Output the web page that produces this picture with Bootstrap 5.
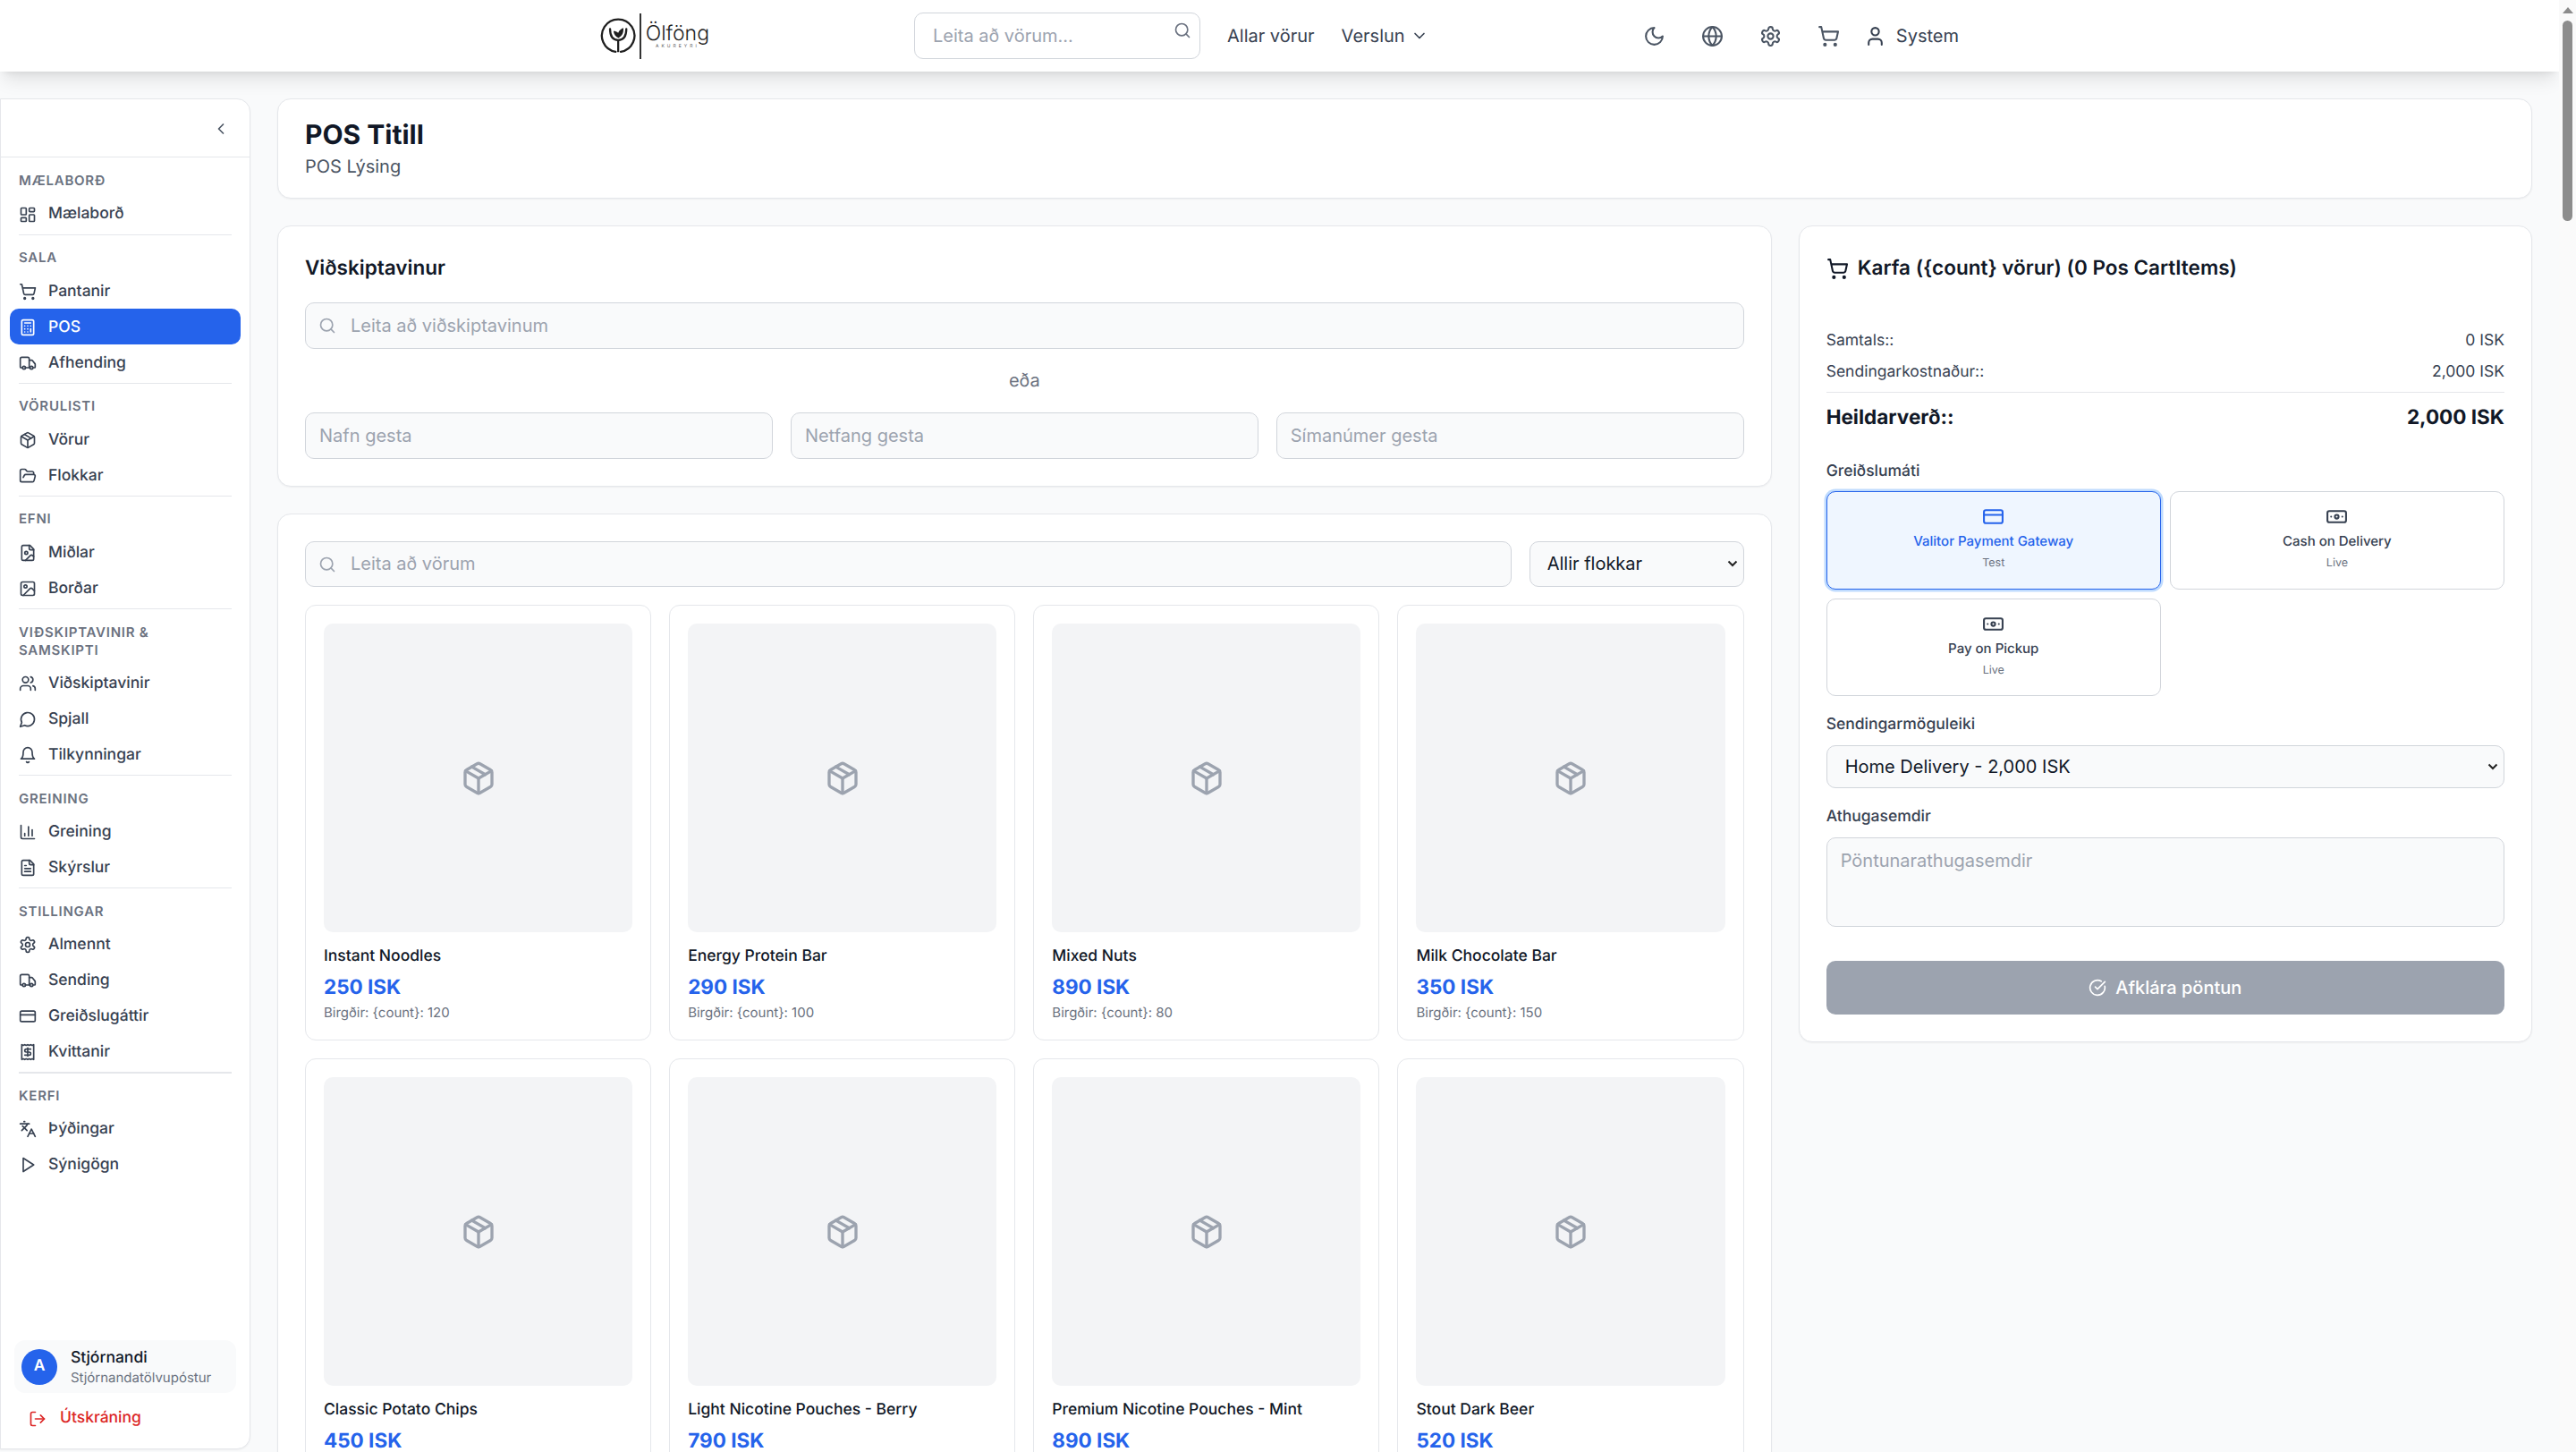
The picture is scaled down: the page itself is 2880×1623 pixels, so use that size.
<!DOCTYPE html>
<html lang="is">
<head>
  <meta charset="UTF-8">
  <title>POS Titill</title>
  <link href="https://cdn.jsdelivr.net/npm/bootstrap@5.3.0/dist/css/bootstrap.min.css" rel="stylesheet">
  <style>
    html, body { height: 100%; overflow: hidden; }
    body { background-color: #f9fafb; font-family: Inter, "Liberation Sans", sans-serif; color: #111827; font-size: 17.5px; text-rendering: geometricPrecision; }
    .ic { width: 20px; height: 20px; flex: none; fill: none; stroke: currentColor; stroke-width: 2; stroke-linecap: round; stroke-linejoin: round; }
    .ic-lg { width: 25px; height: 25px; }

    .page-col { width: 2861px; flex: none; height: 100vh; overflow: hidden; }
    .scroll-rail { width: 19px; flex: none; background-color: #fafafa; position: relative; }
    .rail-up { width: 0; height: 0; margin: 8px auto 0; border: 6.5px solid transparent; border-top: 0; border-bottom: 7px solid #8c8c8c; }
    .rail-thumb { width: 11px; height: 224px; margin: 8px auto 0; background-color: #8c8c8c; border-radius: 6px; }

    /* topbar */
    .topbar { height: 80px; background-color: #fff; position: relative; z-index: 5; box-shadow: 0 12.5px 18.75px -3.75px rgba(0,0,0,.1), 0 5px 7.5px -5px rgba(0,0,0,.1); }
    .topbar-in { width: 1519px; height: 80px; margin-left: 671px; }
    .brand-block { width: 122px; flex: none; }
    .brand-word { font-family: Inter, sans-serif; font-weight: 300; font-size: 23px; line-height: 23px; color: #1f1f1f; }
    .brand-sub { font-size: 5px; line-height: 6px; letter-spacing: 3px; color: #555; text-align: center; }
    .brand-line { width: 1.5px; height: 51px; flex: none; background-color: #333; margin: 0 5px 0 4px; }
    .top-search { width: 320px; height: 52px; margin-left: 229px; position: relative; }
    .top-search .form-control { height: 52px; border: 1.25px solid #d1d5db; border-radius: 10px; font-size: 20px; padding: 0 50px 0 20px; color: #111827; }
    .top-search .ic { position: absolute; right: 10px; top: 10px; color: #6b7280; }
    .form-control::placeholder { color: #9ca3af; opacity: 1; }
    .top-link { font-size: 20px; color: #374151; text-decoration: none; }
    .top-ic { width: 65px; display: flex; justify-content: center; color: #4b5563; }

    /* sidebar */
    .side { width: 280px; height: 1510px; margin-top: 30px; flex: none; background-color: #fff; border: 1.25px solid #e5e7eb; border-radius: 0 15px 15px 0; box-shadow: 0 1px 2px rgba(0,0,0,.05); }
    .side-top { height: 65px; border-bottom: 1.25px solid #e5e7eb; padding: 2px 22px 0 0; color: #4b5563; }
    .side-scroll { padding-top: 16px; }
    .side-label { margin: 0 20px 7px; font-size: 15px; line-height: 20px; font-weight: 600; letter-spacing: .75px; color: #6b7280; text-transform: uppercase; }
    .side-link { height: 40px; margin: 0 10px; padding: 1px 10px 0; gap: 13px; display: flex; align-items: center; font-size: 17.5px; font-weight: 500; color: #374151; border-radius: 10px; text-decoration: none; }
    .side-link.on { background-color: #2563eb; color: #fff; }
    .side-sep { height: 1.25px; margin: 2.5px 20px 15.4px; background-color: #e5e7eb; }
    .side-user { margin: 0 15px 8px; height: 59px; padding: 0 8px; gap: 15px; background-color: #f9fafb; border-radius: 12px; }
    .side-av { width: 40px; height: 40px; background-color: #2563eb; color: #fff; font-size: 17.5px; font-weight: 600; border-radius: 50%; }
    .side-who { padding-top: 2px; }
    .side-name { font-size: 17.5px; line-height: 22px; font-weight: 500; color: #111827; }
    .side-mail { font-size: 15px; line-height: 22px; color: #6b7280; }
    .side-out { height: 40px; margin-bottom: 14px; padding: 1px 0 0 31px; gap: 15px; color: #dc2626; font-size: 17.5px; font-weight: 500; text-decoration: none; }

    /* main */
    .main-col { padding: 30px; width: 2581px; }
    .pane { background-color: #fff; border: 1.25px solid #e5e7eb; border-radius: 15px; box-shadow: 0 1px 2px rgba(0,0,0,.05); }
    .pane-head { padding: 20px 30px; margin-bottom: 30px; }
    .pane-body { padding: 30px; }
    .pos-title { font-size: 30px; line-height: 40px; font-weight: 700; margin: 0; }
    .pos-sub { font-size: 20px; line-height: 30px; color: #4b5563; margin: 0; }
    .pos-row { --bs-gutter-x: 30px; --bs-gutter-y: 0; }
    .block-title { font-size: 22.5px; line-height: 34px; font-weight: 600; margin: 0; }
    .field { height: 51.5px; background-color: #f9fafb; border: 1.25px solid #d1d5db; border-radius: 10px; font-size: 20px; color: #111827; padding: 0 15px; }
    .field-wrap { position: relative; }
    .field-wrap .field { padding-left: 50px; }
    .field-wrap .ic { position: absolute; left: 15px; top: 16px; color: #9ca3af; }
    .or-line { font-size: 20px; line-height: 30px; color: #6b7280; text-align: center; margin: 20px 0 21.5px; }
    .guest-row { --bs-gutter-x: 20px; --bs-gutter-y: 0; }
    .tools { gap: 20px; margin-bottom: 20px; }
    .chev-select { appearance: none; background-image: url("data:image/svg+xml,%3csvg xmlns='http://www.w3.org/2000/svg' viewBox='0 0 12 8'%3e%3cpath fill='none' stroke='%23222' stroke-width='2' d='M1.500 1.500 6 6l4.500-4.500'/%3e%3c/svg%3e"); background-repeat: no-repeat; background-position: right 6px center; background-size: 12px 8px; }
    .cat-select { width: 240px; flex: none; padding: 0 24px 0 19px; }
    .cat-select:focus, .field:focus { box-shadow: none; }

    .prod-row { --bs-gutter-x: 20px; --bs-gutter-y: 20px; }
    .prod { background-color: #fff; border: 1.25px solid #e5e7eb; border-radius: 12px; padding: 20px; }
    .prod-pic { height: 345px; background-color: #f3f4f6; border-radius: 10px; margin-bottom: 14px; color: #9ca3af; }
    .prod-pic .ic { width: 40px; height: 40px; }
    .prod-name { font-size: 17.5px; line-height: 26px; font-weight: 500; color: #111827; }
    .prod-price { font-size: 22.5px; line-height: 35px; font-weight: 700; color: #2563eb; margin-top: 4px; }
    .prod-stock { font-size: 15px; line-height: 21px; color: #6b7280; }

    /* cart */
    .cart-title { gap: 10px; }
    .sum-line { font-size: 17.5px; line-height: 26px; color: #374151; }
    .sum-sep { height: 1.25px; background-color: #e5e7eb; margin: 9px 0 10px; }
    .sum-total { font-size: 22.5px; line-height: 35px; font-weight: 700; color: #111827; }
    .cart-label { font-size: 17.5px; line-height: 26px; font-weight: 500; color: #374151; margin-bottom: 10px; }
    .pay-grid { display: grid; grid-template-columns: 1fr 1fr; gap: 10px; margin-bottom: 19px; }
    .pay-opt { height: 109.500px; padding-top: 15px; background-color: #fff; border: 1.25px solid #d1d5db; border-radius: 10px; text-align: center; color: #374151; }
    .pay-opt .ic { display: block; margin: 0 auto; }
    .pay-opt.on { background-color: #eff6ff; border-color: #2563eb; box-shadow: 0 0 0 2.5px #bfdbfe; color: #2563eb; }
    .pay-name { font-size: 15px; line-height: 22px; font-weight: 500; margin-top: 4px; }
    .pay-mode { font-size: 12.5px; line-height: 18px; color: #6b7280; margin-top: 5px; }
    .ship-select { height: 48px; padding: 0 24px 0 20px; margin-bottom: 18.5px; }
    .note-box { height: 100px; padding: 10.5px 15px; resize: none; }
    .pay-btn { height: 60px; margin-top: 38px; gap: 10px; font-size: 20px; font-weight: 500; color: #fff; background-color: #9ca3af; border: 0; border-radius: 10px; }
    .pay-btn:disabled { color: #fff; background-color: #9ca3af; opacity: 1; }
  </style>
</head>
<body class="d-flex">

<!-- Icons -->
<svg width="0" height="0" class="position-absolute">
  <symbol id="i-search" viewBox="0 0 24 24"><circle cx="11" cy="11" r="8"/><path d="m21 21-4.3-4.3"/></symbol>
  <symbol id="i-down" viewBox="0 0 24 24"><path d="m6 9 6 6 6-6"/></symbol>
  <symbol id="i-left" viewBox="0 0 24 24"><path d="m15 18-6-6 6-6"/></symbol>
  <symbol id="i-moon" viewBox="0 0 24 24"><path d="M12 3a6 6 0 0 0 9 9 9 9 0 1 1-9-9Z"/></symbol>
  <symbol id="i-globe" viewBox="0 0 24 24"><circle cx="12" cy="12" r="10"/><path d="M12 2a14.5 14.5 0 0 0 0 20 14.5 14.5 0 0 0 0-20"/><path d="M2 12h20"/></symbol>
  <symbol id="i-gear" viewBox="0 0 24 24"><path d="M12.22 2h-.44a2 2 0 0 0-2 2v.18a2 2 0 0 1-1 1.73l-.43.25a2 2 0 0 1-2 0l-.15-.08a2 2 0 0 0-2.73.73l-.22.38a2 2 0 0 0 .73 2.73l.15.1a2 2 0 0 1 1 1.72v.51a2 2 0 0 1-1 1.74l-.15.09a2 2 0 0 0-.73 2.73l.22.38a2 2 0 0 0 2.73.73l.15-.08a2 2 0 0 1 2 0l.43.25a2 2 0 0 1 1 1.73V20a2 2 0 0 0 2 2h.44a2 2 0 0 0 2-2v-.18a2 2 0 0 1 1-1.73l.43-.25a2 2 0 0 1 2 0l.15.08a2 2 0 0 0 2.73-.73l.22-.39a2 2 0 0 0-.73-2.73l-.15-.08a2 2 0 0 1-1-1.74v-.5a2 2 0 0 1 1-1.74l.15-.09a2 2 0 0 0 .73-2.73l-.22-.38a2 2 0 0 0-2.73-.73l-.15.08a2 2 0 0 1-2 0l-.43-.25a2 2 0 0 1-1-1.73V4a2 2 0 0 0-2-2z"/><circle cx="12" cy="12" r="3"/></symbol>
  <symbol id="i-cart" viewBox="0 0 24 24"><circle cx="8" cy="21" r="1"/><circle cx="19" cy="21" r="1"/><path d="M2.05 2.05h2l2.66 12.42a2 2 0 0 0 2 1.58h9.78a2 2 0 0 0 1.95-1.57l1.65-7.43H5.12"/></symbol>
  <symbol id="i-user" viewBox="0 0 24 24"><path d="M19 21v-2a4 4 0 0 0-4-4H9a4 4 0 0 0-4 4v2"/><circle cx="12" cy="7" r="4"/></symbol>
  <symbol id="i-dash" viewBox="0 0 24 24"><rect width="7" height="9" x="3" y="3" rx="1"/><rect width="7" height="5" x="14" y="3" rx="1"/><rect width="7" height="9" x="14" y="12" rx="1"/><rect width="7" height="5" x="3" y="16" rx="1"/></symbol>
  <symbol id="i-calc" viewBox="0 0 24 24"><rect width="16" height="20" x="4" y="2" rx="2"/><path d="M8 6h8"/><path d="M16 14v4"/><path d="M16 10h.01"/><path d="M12 10h.01"/><path d="M8 10h.01"/><path d="M12 14h.01"/><path d="M8 14h.01"/><path d="M12 18h.01"/><path d="M8 18h.01"/></symbol>
  <symbol id="i-truck" viewBox="0 0 24 24"><path d="M14 18V6a2 2 0 0 0-2-2H4a2 2 0 0 0-2 2v11a1 1 0 0 0 1 1h2"/><path d="M15 18H9"/><path d="M19 18h2a1 1 0 0 0 1-1v-3.65a1 1 0 0 0-.22-.624l-3.48-4.35A1 1 0 0 0 17.52 8H14"/><circle cx="17" cy="18" r="2"/><circle cx="7" cy="18" r="2"/></symbol>
  <symbol id="i-box" viewBox="0 0 24 24"><path d="M11 21.73a2 2 0 0 0 2 0l7-4a2 2 0 0 0 1-1.73V8a2 2 0 0 0-1-1.73l-7-4a2 2 0 0 0-2 0l-7 4A2 2 0 0 0 3 8v8a2 2 0 0 0 1 1.73z"/><path d="M12 22V12"/><path d="M3.29 7 12 12l8.71-5"/><path d="m7.5 4.27 9 5.15"/></symbol>
  <symbol id="i-folder" viewBox="0 0 24 24"><path d="m6 14 1.5-2.9A2 2 0 0 1 9.24 10H20a2 2 0 0 1 1.94 2.5l-1.54 6a2 2 0 0 1-1.95 1.5H4a2 2 0 0 1-2-2V5a2 2 0 0 1 2-2h3.9a2 2 0 0 1 1.69.9l.81 1.2a2 2 0 0 0 1.67.9H18a2 2 0 0 1 2 2v2"/></symbol>
  <symbol id="i-fimg" viewBox="0 0 24 24"><path d="M15 2H6a2 2 0 0 0-2 2v16a2 2 0 0 0 2 2h12a2 2 0 0 0 2-2V7Z"/><path d="M14 2v4a2 2 0 0 0 2 2h4"/><circle cx="10" cy="12" r="2"/><path d="m20 17-1.296-1.296a2.41 2.41 0 0 0-3.408 0L9 22"/></symbol>
  <symbol id="i-img" viewBox="0 0 24 24"><rect width="18" height="18" x="3" y="3" rx="2"/><circle cx="9" cy="9" r="2"/><path d="m21 15-3.086-3.086a2 2 0 0 0-2.828 0L6 21"/></symbol>
  <symbol id="i-users" viewBox="0 0 24 24"><path d="M16 21v-2a4 4 0 0 0-4-4H6a4 4 0 0 0-4 4v2"/><circle cx="9" cy="7" r="4"/><path d="M22 21v-2a4 4 0 0 0-3-3.87"/><path d="M16 3.13a4 4 0 0 1 0 7.75"/></symbol>
  <symbol id="i-chat" viewBox="0 0 24 24"><path d="M7.9 20A9 9 0 1 0 4 16.1L2 22Z"/></symbol>
  <symbol id="i-bell" viewBox="0 0 24 24"><path d="M6 8a6 6 0 0 1 12 0c0 7 3 9 3 9H3s3-2 3-9"/><path d="M10.3 21a1.94 1.94 0 0 0 3.4 0"/></symbol>
  <symbol id="i-chart" viewBox="0 0 24 24"><path d="M3 3v16a2 2 0 0 0 2 2h16"/><path d="M18 17V9"/><path d="M13 17V5"/><path d="M8 17v-3"/></symbol>
  <symbol id="i-doc" viewBox="0 0 24 24"><path d="M15 2H6a2 2 0 0 0-2 2v16a2 2 0 0 0 2 2h12a2 2 0 0 0 2-2V7Z"/><path d="M14 2v4a2 2 0 0 0 2 2h4"/><path d="M10 9H8"/><path d="M16 13H8"/><path d="M16 17H8"/></symbol>
  <symbol id="i-card" viewBox="0 0 24 24"><rect width="20" height="14" x="2" y="5" rx="2"/><path d="M2 10h20"/></symbol>
  <symbol id="i-receipt" viewBox="0 0 24 24"><path d="M4 2v20l2-1 2 1 2-1 2 1 2-1 2 1 2-1 2 1V2l-2 1-2-1-2 1-2-1-2 1-2-1-2 1Z"/><path d="M16 8h-6a2 2 0 1 0 0 4h4a2 2 0 1 1 0 4H8"/><path d="M12 17.5v-11"/></symbol>
  <symbol id="i-lang" viewBox="0 0 24 24"><path d="m5 8 6 6"/><path d="m4 14 6-6 2-3"/><path d="M2 5h12"/><path d="M7 2h1"/><path d="m22 22-5-10-5 10"/><path d="M14 18h6"/></symbol>
  <symbol id="i-play" viewBox="0 0 24 24"><path d="M6 3l14 9-14 9z"/></symbol>
  <symbol id="i-out" viewBox="0 0 24 24"><path d="M9 21H5a2 2 0 0 1-2-2V5a2 2 0 0 1 2-2h4"/><path d="m16 17 5-5-5-5"/><path d="M21 12H9"/></symbol>
  <symbol id="i-cash" viewBox="0 0 24 24"><rect width="20" height="12" x="2" y="6" rx="2"/><circle cx="12" cy="12" r="2"/><path d="M6 12h.01M18 12h.01"/></symbol>
  <symbol id="i-check" viewBox="0 0 24 24"><path d="M21.801 10A10 10 0 1 1 17 3.335"/><path d="m9 11 3 3L22 4"/></symbol>
</svg>

<div class="page-col">

  <!-- Topbar -->
  <header class="topbar">
    <div class="topbar-in d-flex align-items-center">
      <div class="brand-block d-flex align-items-center">
        <svg width="42" height="42" viewBox="0 0 42 42" fill="none" stroke="#1f1f1f">
          <path d="M24 39.6A19 19 0 1 0 18 39.6" stroke-width="2.4" stroke-linecap="round"/>
          <path d="M11.5 13c0 9 3.5 13 9.5 13s9.5-4 9.500-13" stroke-width="2.4" stroke-linecap="round"/>
          <path d="M21 26v14" stroke-width="2.400"/>
          <path d="M15.500 15.500c2.500 0 3.500 .5 5.500 2 1.500-3 3.500-4.500 6-5.500 .5 5 -1 9-5.500 11.500-3.500-1.500-5.500-4-6-8z" fill="#1f1f1f" stroke="none"/>
        </svg>
        <div class="brand-line"></div>
        <div>
          <div class="brand-word">Ölföng</div>
          <div class="brand-sub">AKUREYRI</div>
        </div>
      </div>
      <div class="top-search">
        <input class="form-control" type="text" placeholder="Leita að vörum...">
        <svg class="ic"><use href="#i-search"/></svg>
      </div>
      <a class="top-link" style="margin-left:30px" href="#">Allar vörur</a>
      <a class="top-link d-flex align-items-center" style="margin-left:30px;gap:6px" href="#">Verslun <svg class="ic"><use href="#i-down"/></svg></a>
      <div class="d-flex align-items-center ms-auto">
        <span class="top-ic"><svg class="ic ic-lg"><use href="#i-moon"/></svg></span>
        <span class="top-ic"><svg class="ic ic-lg"><use href="#i-globe"/></svg></span>
        <span class="top-ic"><svg class="ic ic-lg"><use href="#i-gear"/></svg></span>
        <span class="top-ic"><svg class="ic ic-lg"><use href="#i-cart"/></svg></span>
        <a class="top-link d-flex align-items-center" style="gap:11px;margin-left:7px" href="#"><svg class="ic ic-lg"><use href="#i-user"/></svg>System</a>
      </div>
    </div>
  </header>

  <div class="d-flex align-items-start">

    <!-- Sidebar -->
    <aside class="side d-flex flex-column">
      <div class="side-top d-flex align-items-center justify-content-end"><svg class="ic"><use href="#i-left"/></svg></div>
      <div class="side-scroll">
        <div class="side-label">Mælaborð</div>
        <a class="side-link" href="#"><svg class="ic"><use href="#i-dash"/></svg>Mælaborð</a>
        <div class="side-sep"></div>
        <div class="side-label">Sala</div>
        <a class="side-link" href="#"><svg class="ic"><use href="#i-cart"/></svg>Pantanir</a>
        <a class="side-link on" href="#"><svg class="ic"><use href="#i-calc"/></svg>POS</a>
        <a class="side-link" href="#"><svg class="ic"><use href="#i-truck"/></svg>Afhending</a>
        <div class="side-sep"></div>
        <div class="side-label">Vörulisti</div>
        <a class="side-link" href="#"><svg class="ic"><use href="#i-box"/></svg>Vörur</a>
        <a class="side-link" href="#"><svg class="ic"><use href="#i-folder"/></svg>Flokkar</a>
        <div class="side-sep"></div>
        <div class="side-label">Efni</div>
        <a class="side-link" href="#"><svg class="ic"><use href="#i-fimg"/></svg>Miðlar</a>
        <a class="side-link" href="#"><svg class="ic"><use href="#i-img"/></svg>Borðar</a>
        <div class="side-sep"></div>
        <div class="side-label">Viðskiptavinir &amp; Samskipti</div>
        <a class="side-link" href="#"><svg class="ic"><use href="#i-users"/></svg>Viðskiptavinir</a>
        <a class="side-link" href="#"><svg class="ic"><use href="#i-chat"/></svg>Spjall</a>
        <a class="side-link" href="#"><svg class="ic"><use href="#i-bell"/></svg>Tilkynningar</a>
        <div class="side-sep"></div>
        <div class="side-label">Greining</div>
        <a class="side-link" href="#"><svg class="ic"><use href="#i-chart"/></svg>Greining</a>
        <a class="side-link" href="#"><svg class="ic"><use href="#i-doc"/></svg>Skýrslur</a>
        <div class="side-sep"></div>
        <div class="side-label">Stillingar</div>
        <a class="side-link" href="#"><svg class="ic"><use href="#i-gear"/></svg>Almennt</a>
        <a class="side-link" href="#"><svg class="ic"><use href="#i-truck"/></svg>Sending</a>
        <a class="side-link" href="#"><svg class="ic"><use href="#i-card"/></svg>Greiðslugáttir</a>
        <a class="side-link" href="#"><svg class="ic"><use href="#i-receipt"/></svg>Kvittanir</a>
        <div class="side-sep"></div>
        <div class="side-label">Kerfi</div>
        <a class="side-link" href="#"><svg class="ic"><use href="#i-lang"/></svg>Þýðingar</a>
        <a class="side-link" href="#"><svg class="ic"><use href="#i-play"/></svg>Sýnigögn</a>
      </div>
      <div class="mt-auto">
        <div class="side-user d-flex align-items-center">
          <div class="side-av d-flex align-items-center justify-content-center">A</div>
          <div class="side-who">
            <div class="side-name">Stjórnandi</div>
            <div class="side-mail">Stjórnandatölvupóstur</div>
          </div>
        </div>
        <a class="side-out d-flex align-items-center" href="#"><svg class="ic"><use href="#i-out"/></svg>Útskráning</a>
      </div>
    </aside>

    <!-- Main Content -->
    <main class="main-col">
      <div class="pane pane-head">
        <h1 class="pos-title">POS Titill</h1>
        <p class="pos-sub">POS Lýsing</p>
      </div>

      <div class="row pos-row">
        <div class="col-8">
          <!-- Customer -->
          <section class="pane pane-body" style="margin-bottom:30px">
            <h2 class="block-title" style="margin-bottom:21px">Viðskiptavinur</h2>
            <div class="field-wrap">
              <input class="form-control field" type="text" placeholder="Leita að viðskiptavinum">
              <svg class="ic"><use href="#i-search"/></svg>
            </div>
            <div class="or-line">eða</div>
            <div class="row guest-row">
              <div class="col-4"><input class="form-control field" type="text" placeholder="Nafn gesta"></div>
              <div class="col-4"><input class="form-control field" type="email" placeholder="Netfang gesta"></div>
              <div class="col-4"><input class="form-control field" type="tel" placeholder="Símanúmer gesta"></div>
            </div>
          </section>

          <!-- Products -->
          <section class="pane pane-body">
            <div class="d-flex tools">
              <div class="field-wrap flex-grow-1">
                <input class="form-control field" type="text" placeholder="Leita að vörum">
                <svg class="ic"><use href="#i-search"/></svg>
              </div>
              <select class="form-select field chev-select cat-select"><option>Allir flokkar</option></select>
            </div>
            <div class="row row-cols-4 prod-row">
              <div class="col"><div class="prod">
                <div class="prod-pic d-flex align-items-center justify-content-center"><svg class="ic"><use href="#i-box"/></svg></div>
                <div class="prod-name">Instant Noodles</div>
                <div class="prod-price">250 ISK</div>
                <div class="prod-stock">Birgðir: {count}: 120</div>
              </div></div>
              <div class="col"><div class="prod">
                <div class="prod-pic d-flex align-items-center justify-content-center"><svg class="ic"><use href="#i-box"/></svg></div>
                <div class="prod-name">Energy Protein Bar</div>
                <div class="prod-price">290 ISK</div>
                <div class="prod-stock">Birgðir: {count}: 100</div>
              </div></div>
              <div class="col"><div class="prod">
                <div class="prod-pic d-flex align-items-center justify-content-center"><svg class="ic"><use href="#i-box"/></svg></div>
                <div class="prod-name">Mixed Nuts</div>
                <div class="prod-price">890 ISK</div>
                <div class="prod-stock">Birgðir: {count}: 80</div>
              </div></div>
              <div class="col"><div class="prod">
                <div class="prod-pic d-flex align-items-center justify-content-center"><svg class="ic"><use href="#i-box"/></svg></div>
                <div class="prod-name">Milk Chocolate Bar</div>
                <div class="prod-price">350 ISK</div>
                <div class="prod-stock">Birgðir: {count}: 150</div>
              </div></div>
              <div class="col"><div class="prod">
                <div class="prod-pic d-flex align-items-center justify-content-center"><svg class="ic"><use href="#i-box"/></svg></div>
                <div class="prod-name">Classic Potato Chips</div>
                <div class="prod-price">450 ISK</div>
              </div></div>
              <div class="col"><div class="prod">
                <div class="prod-pic d-flex align-items-center justify-content-center"><svg class="ic"><use href="#i-box"/></svg></div>
                <div class="prod-name">Light Nicotine Pouches - Berry</div>
                <div class="prod-price">790 ISK</div>
              </div></div>
              <div class="col"><div class="prod">
                <div class="prod-pic d-flex align-items-center justify-content-center"><svg class="ic"><use href="#i-box"/></svg></div>
                <div class="prod-name">Premium Nicotine Pouches - Mint</div>
                <div class="prod-price">890 ISK</div>
              </div></div>
              <div class="col"><div class="prod">
                <div class="prod-pic d-flex align-items-center justify-content-center"><svg class="ic"><use href="#i-box"/></svg></div>
                <div class="prod-name">Stout Dark Beer</div>
                <div class="prod-price">520 ISK</div>
              </div></div>
            </div>
          </section>
        </div>

        <!-- Cart -->
        <div class="col-4">
          <section class="pane pane-body">
            <h2 class="block-title cart-title d-flex align-items-center" style="margin-bottom:51px"><svg class="ic ic-lg"><use href="#i-cart"/></svg>Karfa ({count} vörur) (0 Pos CartItems)</h2>
            <div class="d-flex justify-content-between sum-line" style="margin-bottom:9px"><span>Samtals::</span><span>0 ISK</span></div>
            <div class="d-flex justify-content-between sum-line"><span>Sendingarkostnaður::</span><span>2,000 ISK</span></div>
            <div class="sum-sep"></div>
            <div class="d-flex justify-content-between sum-total" style="margin-bottom:30px"><span>Heildarverð::</span><span>2,000 ISK</span></div>
            <div class="cart-label" style="margin-bottom:9px">Greiðslumáti</div>
            <div class="pay-grid">
              <div class="pay-opt on">
                <svg class="ic ic-lg"><use href="#i-card"/></svg>
                <div class="pay-name">Valitor Payment Gateway</div>
                <div class="pay-mode">Test</div>
              </div>
              <div class="pay-opt">
                <svg class="ic ic-lg"><use href="#i-cash"/></svg>
                <div class="pay-name">Cash on Delivery</div>
                <div class="pay-mode">Live</div>
              </div>
              <div class="pay-opt">
                <svg class="ic ic-lg"><use href="#i-cash"/></svg>
                <div class="pay-name">Pay on Pickup</div>
                <div class="pay-mode">Live</div>
              </div>
            </div>
            <div class="cart-label">Sendingarmöguleiki</div>
            <select class="form-select field chev-select ship-select"><option>Home Delivery - 2,000 ISK</option></select>
            <div class="cart-label">Athugasemdir</div>
            <textarea class="form-control field note-box" placeholder="Pöntunarathugasemdir"></textarea>
            <button class="btn pay-btn w-100 d-flex align-items-center justify-content-center" disabled><svg class="ic"><use href="#i-check"/></svg>Afklára pöntun</button>
          </section>
        </div>
      </div>
    </main>
  </div>
</div>

<!-- Page scrollbar -->
<div class="scroll-rail">
  <div class="rail-up"></div>
  <div class="rail-thumb"></div>
</div>

<script src="https://cdn.jsdelivr.net/npm/bootstrap@5.3.0/dist/js/bootstrap.bundle.min.js"></script>
</body>
</html>
